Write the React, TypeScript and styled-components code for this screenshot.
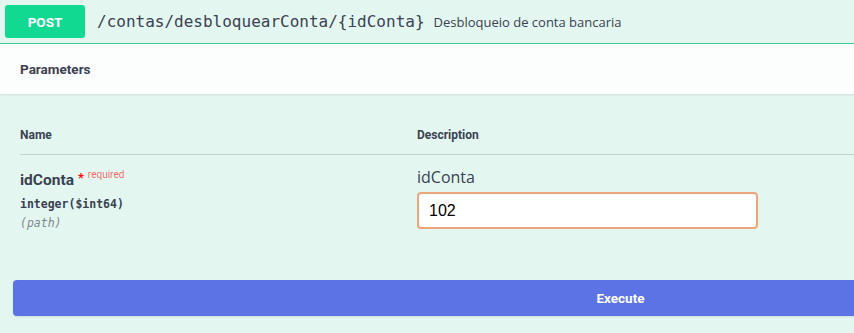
import React from 'react';
import styled, { createGlobalStyle } from 'styled-components';

const GlobalStyle = createGlobalStyle`
  html, body {
    margin: 0;
    padding: 0;
    background: #e3f7f0;
    overflow: hidden;
  }
`;

const Opblock = styled.div`
  width: 1240px;
  background: #e3f7f0;
  color: #3b4151;
`;

const Summary = styled.div`
  display: flex;
  align-items: center;
  height: 43px;
  padding: 0 5px;
  border-bottom: 1px solid #3ccf95;
  box-sizing: content-box;
`;

const Method = styled.span`
  display: flex;
  align-items: center;
  justify-content: center;
  width: 80px;
  height: 33px;
  border-radius: 3px;
  background: #12d992;
  color: #ffffff;
  font-family: Roboto, sans-serif;
  font-weight: 700;
  font-size: 13.5px;
`;

const Path = styled.span`
  padding: 0 9px 0 12px;
  font-family: 'DejaVu Sans Mono', monospace;
  font-size: 16px;
  color: #3b4151;
`;

const SummaryText = styled.span`
  font-family: 'Open Sans', sans-serif;
  font-size: 13px;
  color: #3b4151;
`;

const SectionHeader = styled.div`
  display: flex;
  align-items: center;
  height: 50px;
  padding: 0 20px;
  background: rgba(255, 255, 255, 0.85);
  box-shadow: 0 1px 2px rgba(0, 0, 0, 0.1);
`;

const SectionTitle = styled.h4`
  margin: 0;
  font-family: Roboto, sans-serif;
  font-weight: 700;
  font-size: 13.5px;
  color: #3b4151;
`;

const Table = styled.div`
  padding: 0 20px;
`;

const HeadRow = styled.div`
  display: flex;
  padding: 33px 0 11px;
  border-bottom: 1px solid rgba(59, 65, 81, 0.2);
`;

const HeadCell = styled.div<{ $width?: number }>`
  ${({ $width }) => ($width ? `width: ${$width}px;` : 'flex: 1;')}
  font-family: Roboto, sans-serif;
  font-weight: 700;
  font-size: 12px;
  line-height: 16px;
  color: #3b4151;
`;

const Row = styled.div`
  display: flex;
  align-items: flex-start;
`;

const NameCell = styled.div`
  width: 397px;
  padding-top: 15px;
`;

const ParamName = styled.div`
  height: 20px;
  font-family: Roboto, sans-serif;
  font-weight: 700;
  font-size: 15.5px;
  line-height: 20px;
  color: #3b4151;
`;

const Star = styled.span`
  position: relative;
  top: -3px;
  margin-left: 4px;
  color: #ff0000;
  font-size: 13px;
`;

const Required = styled.span`
  position: relative;
  top: -7px;
  margin-left: 4px;
  font-family: Roboto, sans-serif;
  font-weight: 400;
  font-size: 10px;
  color: rgba(255, 0, 0, 0.6);
`;

const ParamType = styled.div<{ $italic?: boolean }>`
  margin-top: ${({ $italic }) => ($italic ? '3px' : '6px')};
  font-family: 'DejaVu Sans Mono', monospace;
  font-size: 11.5px;
  line-height: 16px;
  font-style: ${({ $italic }) => ($italic ? 'italic' : 'normal')};
  font-weight: ${({ $italic }) => ($italic ? 400 : 600)};
  color: ${({ $italic }) => ($italic ? '#80868f' : '#3b4151')};
`;

const DescCell = styled.div`
  flex: 1;
  padding-top: 12px;
`;

const DescLabel = styled.div`
  font-family: 'Open Sans', sans-serif;
  font-size: 16px;
  line-height: 20px;
  color: #3b4151;
`;

const Input = styled.input`
  display: block;
  box-sizing: border-box;
  width: 341px;
  height: 37px;
  margin-top: 5px;
  padding: 0 10px;
  border: 2px solid #eba67c;
  border-radius: 4px;
  background: #ffffff;
  font-family: 'Liberation Sans', Arial, sans-serif;
  font-size: 16px;
  color: #000000;
  outline: none;
`;

const ExecuteWrapper = styled.div`
  padding: 49px 12px 20px 13px;
`;

const ExecuteButton = styled.button`
  display: block;
  width: 100%;
  height: 36px;
  border: none;
  border-radius: 4px;
  background: #5c73e6;
  box-shadow: 0 1px 2px rgba(0, 0, 0, 0.1);
  color: #ffffff;
  font-family: Roboto, sans-serif;
  font-weight: 700;
  font-size: 13.5px;
  cursor: pointer;
`;

export default function App() {
  return (
    <>
      <GlobalStyle />
      <Opblock>
        <Summary>
          <Method>POST</Method>
          <Path>/contas/desbloquearConta/&#8203;{'{idConta}'}</Path>
          <SummaryText>Desbloqueio de conta bancaria</SummaryText>
        </Summary>
        <SectionHeader>
          <SectionTitle>Parameters</SectionTitle>
        </SectionHeader>
        <Table>
          <HeadRow>
            <HeadCell $width={397}>Name</HeadCell>
            <HeadCell>Description</HeadCell>
          </HeadRow>
          <Row>
            <NameCell>
              <ParamName>
                idConta
                <Star>*</Star>
                <Required>required</Required>
              </ParamName>
              <ParamType>integer($int64)</ParamType>
              <ParamType $italic>(path)</ParamType>
            </NameCell>
            <DescCell>
              <DescLabel>idConta</DescLabel>
              <Input defaultValue="102" />
            </DescCell>
          </Row>
        </Table>
        <ExecuteWrapper>
          <ExecuteButton>Execute</ExecuteButton>
        </ExecuteWrapper>
      </Opblock>
    </>
  );
}
